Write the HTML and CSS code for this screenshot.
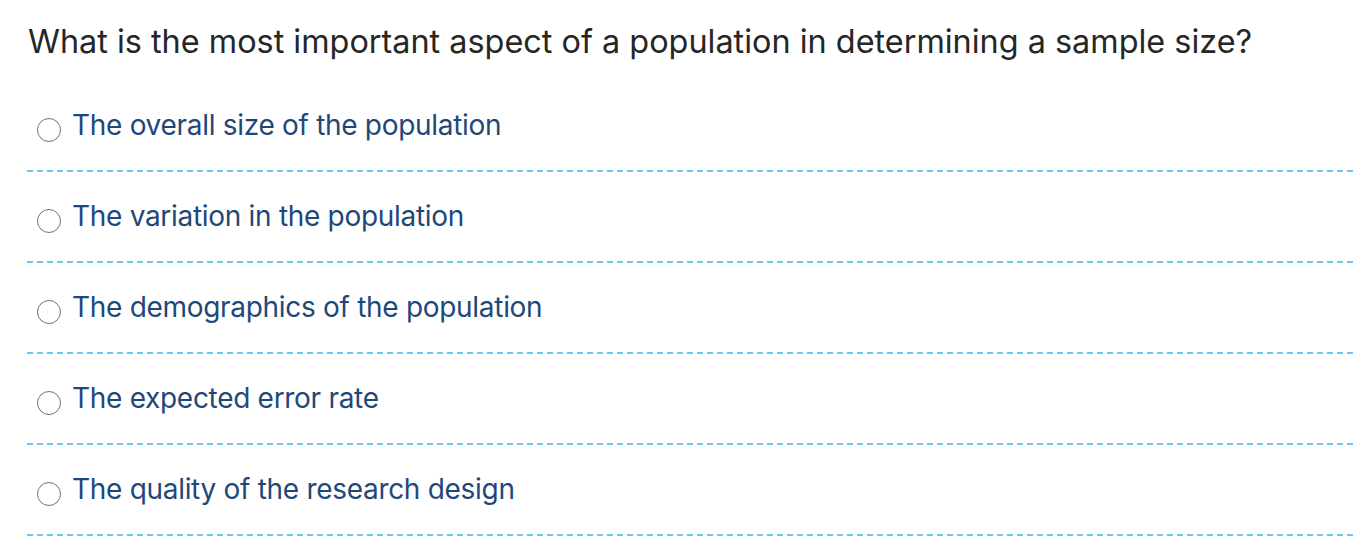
FILE: index.html
```html
<!DOCTYPE html>
<html lang="en">
<head>
<meta charset="utf-8">
<title>Question</title>
<link rel="stylesheet" href="styles.css">
</head>
<body>
<div class="question">
  <h1 class="question-title">What is the most important aspect of a population in determining a sample size?</h1>
  <ul class="options">
    <li class="option"><label class="option-label"><span class="radio"></span><span class="option-text">The overall size of the population</span></label></li>
    <li class="option"><label class="option-label"><span class="radio"></span><span class="option-text">The variation in the population</span></label></li>
    <li class="option"><label class="option-label"><span class="radio"></span><span class="option-text">The demographics of the population</span></label></li>
    <li class="option"><label class="option-label"><span class="radio"></span><span class="option-text">The expected error rate</span></label></li>
    <li class="option"><label class="option-label"><span class="radio"></span><span class="option-text">The quality of the research design</span></label></li>
  </ul>
</div>
</body>
</html>
```

FILE: styles.css
```css
html, body {
  margin: 0;
  padding: 0;
  background: #ffffff;
}

body {
  font-family: "Inter", "Noto Sans", sans-serif;
}

.question {
  padding: 20px 0 0 27px;
}

.question-title {
  margin: 0 0 0 1px;
  font-size: 32.4px;
  line-height: 44px;
  font-weight: 400;
  color: #262626;
  letter-spacing: 0;
}

.options {
  list-style: none;
  margin: 17px 0 0 0;
  padding: 0;
}

.option {
  height: 91px;
  box-sizing: border-box;
  padding-top: 24px;
  background-image: repeating-linear-gradient(to right, #6cc9f4 0 6px, transparent 6px 10px);
  background-size: 100% 2px;
  background-repeat: no-repeat;
  background-position: left bottom;
}

.option-label {
  display: flex;
  align-items: center;
  gap: 11px;
  padding-left: 10px;
}

.radio {
  width: 22px;
  height: 22px;
  border: 1.7px solid #707070;
  border-radius: 50%;
  flex: none;
  margin-top: 10px;
}

.option-text {
  font-size: 28px;
  line-height: 40px;
  color: #1f4879;
  letter-spacing: -0.3px;
}
```
